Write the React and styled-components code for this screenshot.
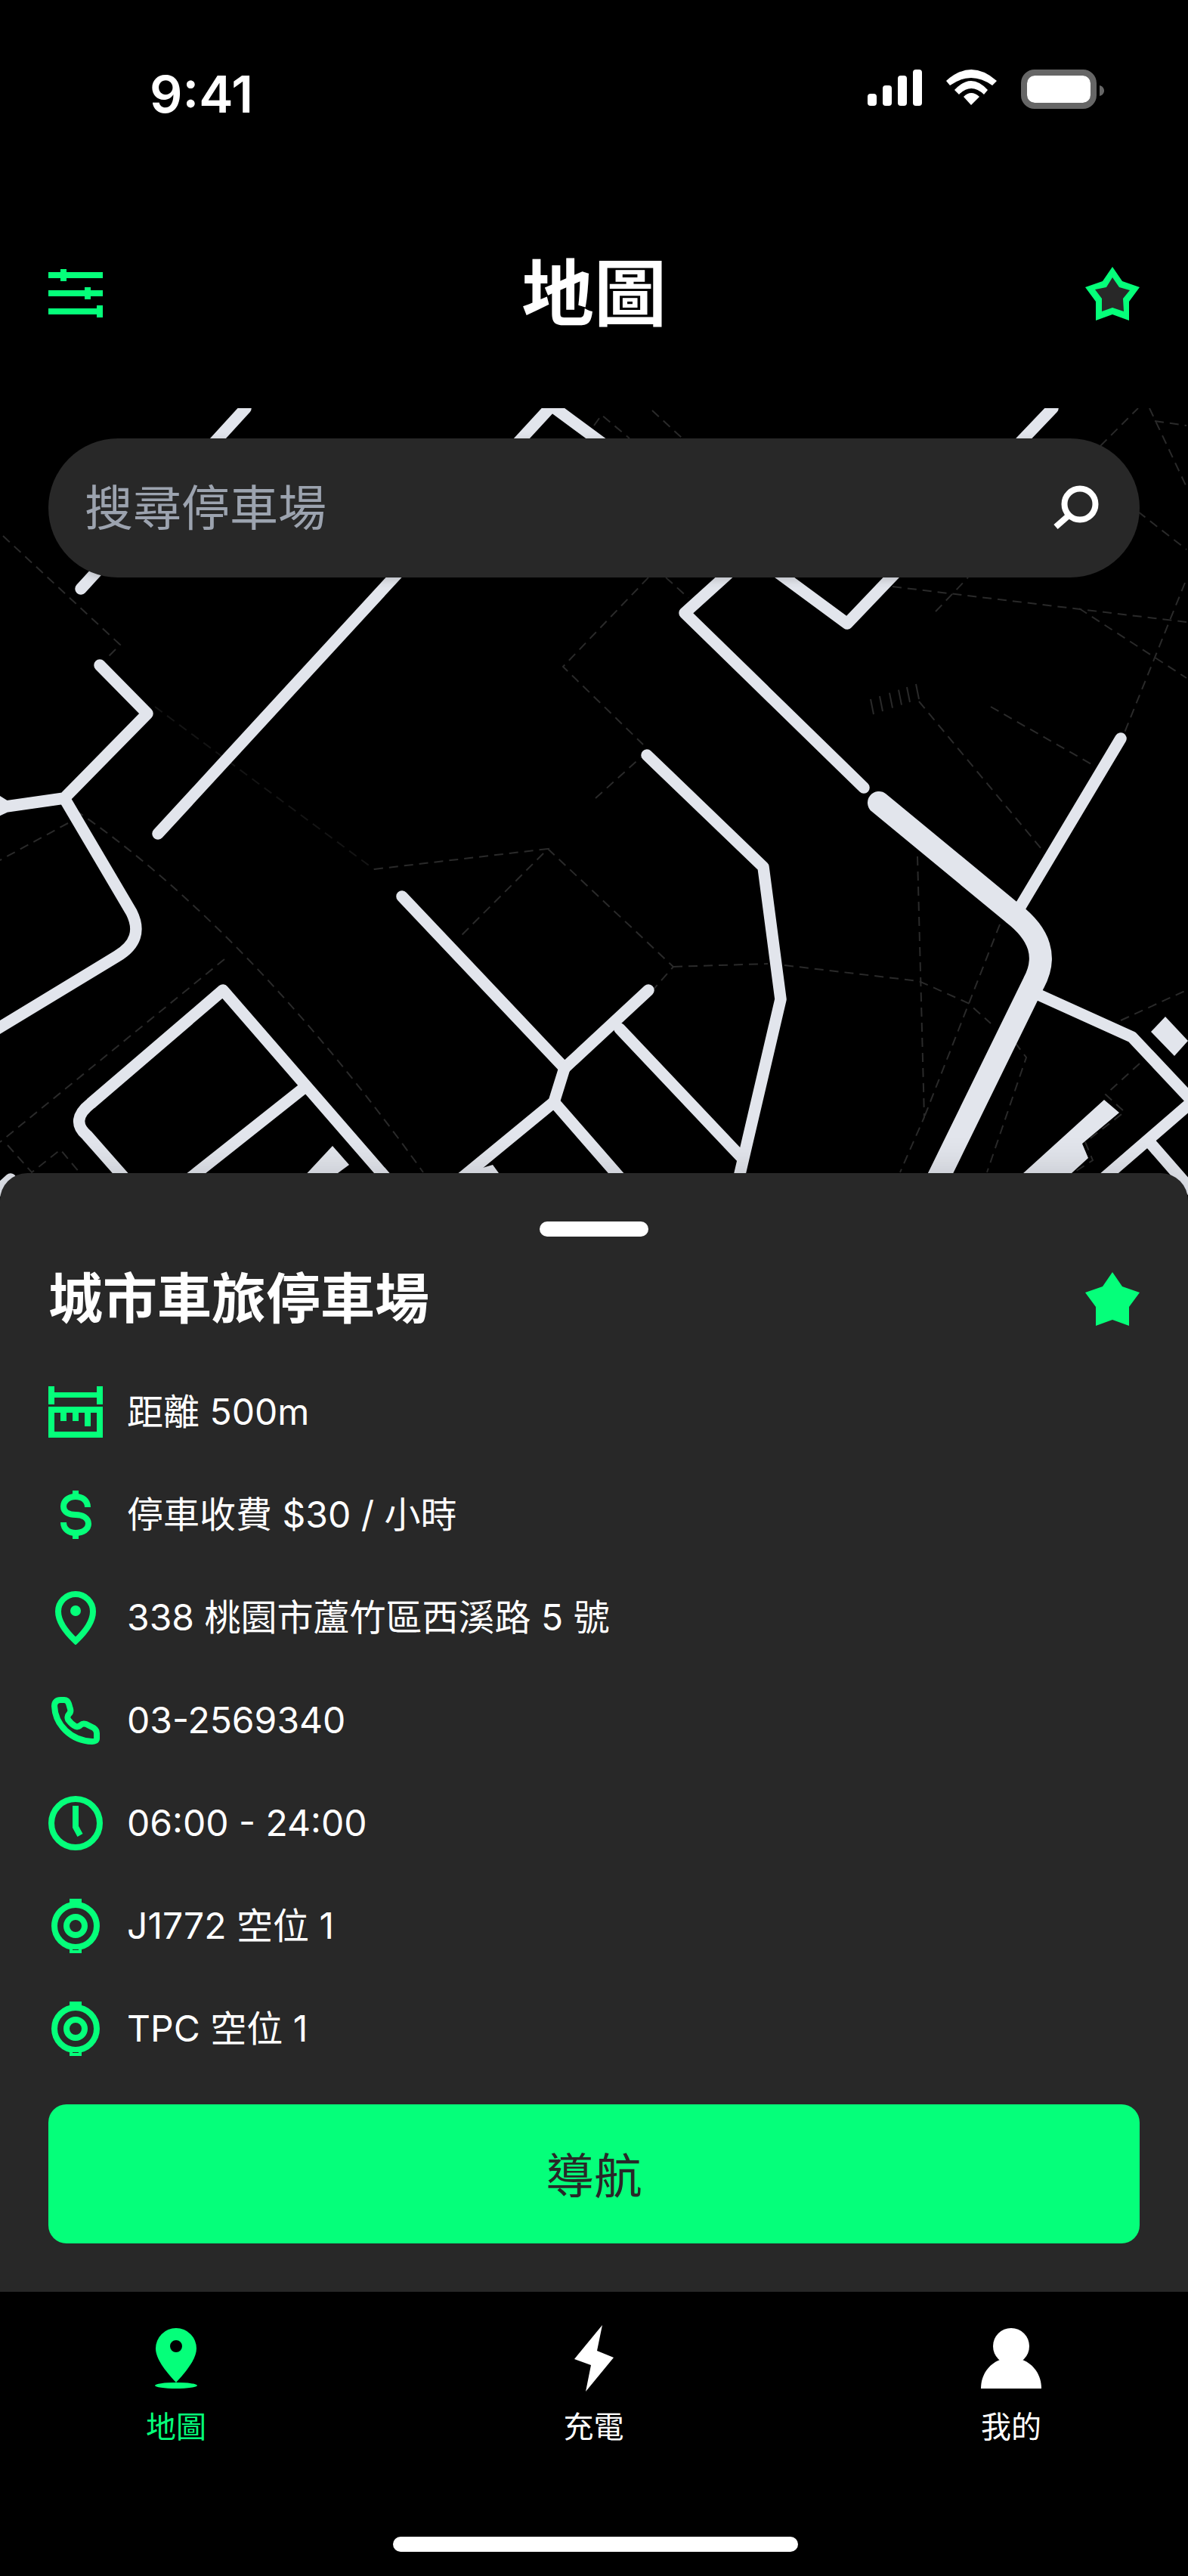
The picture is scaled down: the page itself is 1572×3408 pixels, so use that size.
import React from "react";
import styled, { createGlobalStyle } from "styled-components";

const GREEN = "#05FF7A";
const PANEL = "#282828";
const FONT = `Inter, "Noto Sans CJK TC", sans-serif`;

const Global = createGlobalStyle`
  html, body { margin: 0; padding: 0; background: #000; }
  body { font-family: ${FONT}; }
  #root { width: 1572px; }
`;

const Screen = styled.div`
  width: 1572px;
  height: 3408px;
  background: #000;
  display: flex;
  flex-direction: column;
  overflow: hidden;
  color: #fff;
`;

const StatusBar = styled.div`
  height: 176px;
  box-sizing: border-box;
  padding: 92px 111px 0 198px;
  display: flex;
  justify-content: space-between;
  align-items: flex-start;
`;
const Time = styled.div`
  font-size: 68px;
  line-height: 64px;
  font-weight: 600;
`;
const StatusIcons = styled.div`
  display: flex;
  align-items: flex-start;
  gap: 32px;
  svg { display: block; }
`;

const Header = styled.header`
  position: relative;
  z-index: 2;
  height: 72px;
  padding: 176px 64px 116px;
  display: flex;
  justify-content: space-between;
  align-items: center;
  background: #000;
`;
const HeaderTitle = styled.h1`
  margin: 0;
  font-size: 96px;
  line-height: 72px;
  font-weight: 700;
`;
const IconBox = styled.svg`
  width: 72px;
  height: 72px;
  flex: none;
  display: block;
`;

const MapArea = styled.div`
  position: relative;
  height: 1052px;
  flex: none;
  padding: 40px 64px 0;
  box-sizing: border-box;
`;
const MapSvg = styled.svg`
  position: absolute;
  inset: 0;
  width: 1572px;
  height: 1052px;
  display: block;
`;
const Road = styled.path`
  fill: none;
  stroke: #e2e5ec;
  stroke-width: ${(p) => p.$w || 15.5}px;
  stroke-linecap: round;
  stroke-linejoin: round;
`;
const Block = styled.polygon`
  fill: #e2e5ec;
`;
const Trail = styled.path`
  fill: none;
  stroke: ${(p) => p.$c || "#2a2a2a"};
  stroke-width: 2px;
  stroke-dasharray: 12 8;
`;
const SearchBar = styled.div`
  position: relative;
  height: 184px;
  border-radius: 92px;
  background: ${PANEL};
  box-shadow: 0 3px 12px rgba(0, 0, 0, 0.18);
  display: flex;
  align-items: center;
  justify-content: space-between;
  padding: 0 50px 0 48px;
`;
const Placeholder = styled.span`
  font-size: 64px;
  color: #9ca3af;
  line-height: 1;
`;
const SearchIcon = styled.svg`
  width: 64px;
  height: 64px;
  margin-top: 2px;
`;

const Sheet = styled.section`
  position: relative;
  z-index: 1;
  margin-top: -40px;
  height: 1480px;
  flex: none;
  box-sizing: border-box;
  background: ${PANEL};
  border-radius: 36px 36px 0 0;
  box-shadow: 0 0 50px rgba(0, 0, 0, 0.16);
  padding: 64px;
  display: flex;
  flex-direction: column;
`;
const Handle = styled.div`
  width: 144px;
  height: 20px;
  border-radius: 10px;
  background: #fff;
  align-self: center;
`;
const TitleRow = styled.div`
  margin-top: 46px;
  height: 72px;
  display: flex;
  align-items: center;
  justify-content: space-between;
`;
const Title = styled.h2`
  margin: 0;
  font-size: 72px;
  font-weight: 700;
  line-height: 72px;
`;
const Rows = styled.ul`
  list-style: none;
  margin: 78px 0 0;
  padding: 0;
  display: flex;
  flex-direction: column;
  gap: 64px;
`;
const Row = styled.li`
  height: 72px;
  display: flex;
  align-items: center;
  gap: 32px;
  font-size: 48px;
  line-height: 72px;
  font-weight: 400;
`;
const NavButton = styled.button`
  margin-top: 64px;
  height: 184px;
  flex: none;
  border: 0;
  border-radius: 24px;
  padding: 0 0 4px;
  background: ${GREEN};
  color: ${PANEL};
  font-family: ${FONT};
  font-size: 64px;
  font-weight: 400;
`;

const TabBar = styled.nav`
  flex: 1;
  padding: 44px 65px 0 64px;
  display: flex;
  justify-content: space-between;
  align-items: flex-start;
  background: #000;
`;
const Tab = styled.div`
  width: 338px;
  display: flex;
  flex-direction: column;
  align-items: center;
  color: ${(p) => (p.$active ? GREEN : "#fff")};
`;
const TabIcon = styled.svg`
  height: 88px;
  width: 88px;
  display: block;
`;
const TabLabel = styled.span`
  margin-top: 17px;
  font-size: 40px;
  line-height: 60px;
  font-weight: 400;
`;
const HomeIndicator = styled.div`
  position: absolute;
  left: 520px;
  top: 3356px;
  width: 536px;
  height: 20px;
  border-radius: 10px;
  background: #fff;
`;

const roads = [
  ["M325 540L107 779"],
  ["M209 1103L730 537L1121 825L1393 540"],
  ["M132 880L195 944L85 1056L8 1067L-20 1050M8 1067L-20 1080"],
  ["M85 1056L174 1207Q192 1243 155 1265L-10 1365"],
  ["M540 1592L295 1310L120 1460Q92 1482 115 1502L175 1570"],
  ["M400 1441L212 1590"],
  ["M532 1186L747 1413L858 1310"],
  ["M747 1413L733 1458L570 1592"],
  ["M733 1458L850 1592"],
  ["M820 1361L980 1530"],
  ["M856 999L1010 1147L1033 1322L975 1570"],
  ["M1143 1042L906 811L958 764L1000 725"],
  ["M1348 1203L1483 977"],
  ["M1372 1315L1498 1372L1578 1457L1430 1585"],
  ["M1522 1512L1590 1590"],
  ["M-10 1582L14 1560"],
  ["M1163 1062L1340 1208Q1395 1250 1368 1300L1225 1592", 30],
];

const blocks = [
  "1542,1345 1572,1377 1554,1397 1523,1365",
  "1461,1455 1481,1472 1432,1513 1440,1532 1418,1552 1385,1592 1310,1592",
  "440,1516 462,1541 447,1552 385,1575",
  "652,1541 660,1552 640,1570 615,1552",
];

const trails = [
  ["M4 709L159 853L140 872"],
  ["M205 935L495 1150", "#141414"],
  ["M495 1150L725 1123L609 1239"],
  ["M725 1123L891 1279L861 1313"],
  ["M891 1279L1016 1275M1038 1277L1216 1298L1281 1327L1311 1354"],
  ["M1343 1379L1358 1399L1306 1551"],
  ["M1214 1133L1223 1478L1191 1551"],
  ["M1323 1223L1223 1478"],
  ["M858 764L745 882L851 985"],
  ["M788 1056L848 1002"],
  ["M881 764L911 791"],
  ["M786 563L796 549L833 580"],
  ["M863 543L903 580"],
  ["M1456 590L1506 540"],
  ["M1528 557L1570 563"],
  ["M1521 540L1570 644"],
  ["M1506 677L1570 727"],
  ["M1181 776L1570 823"],
  ["M1238 809L1281 764"],
  ["M1428 805L1570 897"],
  ["M1568 771L1488 969"],
  ["M1216 928L1378 1123"],
  ["M1311 935L1446 1012"],
  ["M1483 1350L1570 1310"],
  ["M1508 1407L1463 1448L1488 1471L1436 1511L1446 1535L1421 1551"],
  ["M297 1269L0 1511"],
  ["M90 1089L0 1138"],
  ["M100 1072Q330 1230 560 1551"],
  ["M10 1515L42 1551L80 1521L105 1551"],
];

const ticks = [1156, 1168, 1181, 1193, 1204, 1216];

const StarOutline = () => (
  <IconBox viewBox="1436 352 72 72">
    <polygon fill={GREEN} points="1472,353 1485,372 1508,380 1494,399 1494,424 1472,416 1450,424 1450,399 1436,380 1459,372" />
    <polygon fill={PANEL} points="1472,367 1481,380 1495,384 1486,395 1487,412 1472,407 1458,412 1458,395 1449,383 1464,380" />
  </IconBox>
);
const StarFilled = () => (
  <IconBox viewBox="1436 352 72 72">
    <polygon fill={GREEN} points="1472,353 1485,372 1508,380 1494,399 1494,424 1472,416 1450,424 1450,399 1436,380 1459,372" />
  </IconBox>
);
const FilterIcon = () => (
  <IconBox viewBox="64 352 72 72" fill={GREEN}>
    <rect x="64" y="360" width="72" height="8" />
    <rect x="80" y="356" width="8" height="16" />
    <rect x="64" y="384" width="72" height="8" />
    <rect x="112" y="380" width="8" height="16" />
    <rect x="64" y="408" width="72" height="8" />
    <rect x="128" y="404" width="8" height="16" />
  </IconBox>
);

const RulerIcon = () => (
  <IconBox viewBox="0 0 72 72" fill={GREEN}>
    <rect x="0" y="2" width="8" height="24" />
    <rect x="64" y="2" width="8" height="24" />
    <rect x="0" y="10" width="72" height="7" />
    <rect x="4" y="33" width="64" height="33" fill="none" stroke={GREEN} strokeWidth="8" />
    <rect x="16" y="33" width="8" height="15" />
    <rect x="32" y="33" width="8" height="15" />
    <rect x="48" y="33" width="8" height="22" />
  </IconBox>
);
const DollarIcon = () => (
  <IconBox viewBox="0 0 72 72" fill="none" stroke={GREEN} strokeWidth="8">
    <path d="M36 4V12M36 60V68" />
    <path d="M52 26C52 17 45 12 36 12C26 12 20 18 20 25C20 33 28 36 36 36C45 36 53 40 53 48C53 55 46 60 36 60C27 60 20 55 20 46" />
  </IconBox>
);
const PinIcon = () => (
  <IconBox viewBox="0 0 72 72">
    <path d="M36 67C20 52 13 40 13 28A23 23 0 0 1 59 28C59 40 52 52 36 67Z" fill="none" stroke={GREEN} strokeWidth="8" />
    <circle cx="36" cy="27" r="7" fill={GREEN} />
  </IconBox>
);
const PhoneIcon = () => (
  <IconBox viewBox="0 0 72 72">
    <path
      d="M8 17C8 12 11 9 16 9L21 9C24 9 26 11 27 14L29 21C30 24 29 26 27 28C25 30 25 32 26 35C29 39 32 42 36 44C39 45 41 44 43 42C45 40 47 40 50 41L60 46C63 48 64 50 64 53L64 60C64 63 61 64 58 64C30 63 9 42 8 17Z"
      fill="none"
      stroke={GREEN}
      strokeWidth="8"
      strokeLinejoin="round"
    />
  </IconBox>
);
const ClockIcon = () => (
  <IconBox viewBox="0 0 72 72" fill="none" stroke={GREEN} strokeWidth="8">
    <circle cx="36" cy="36" r="32" />
    <path d="M36 13V41L42 52" />
  </IconBox>
);
const PlugIcon = () => (
  <IconBox viewBox="0 0 72 72" fill="none" stroke={GREEN} strokeWidth="8">
    <circle cx="36" cy="36" r="28" />
    <circle cx="36" cy="36" r="12" />
    <rect x="28" y="0" width="16" height="6" fill={GREEN} stroke="none" />
    <rect x="30" y="65" width="12" height="5" strokeWidth="4" fill={PANEL} />
  </IconBox>
);

const details = [
  [RulerIcon, "距離 500m"],
  [DollarIcon, "停車收費 $30 / 小時"],
  [PinIcon, "338 桃園市蘆竹區西溪路 5 號"],
  [PhoneIcon, "03-2569340"],
  [ClockIcon, "06:00 - 24:00"],
  [PlugIcon, "J1772 空位 1"],
  [PlugIcon, "TPC 空位 1"],
];

export default function App() {
  return (
    <Screen>
      <Global />
      <StatusBar>
        <Time>9:41</Time>
        <StatusIcons>
          <svg width="72" height="48" viewBox="1147 92 72 48" fill="#fff">
            <rect x="1147" y="124" width="12" height="16" rx="4" />
            <rect x="1167" y="113" width="12" height="27" rx="4" />
            <rect x="1187" y="100" width="12" height="40" rx="4" />
            <rect x="1207" y="92" width="12" height="48" rx="4" />
          </svg>
          <svg width="67" height="47" viewBox="1252 92 67 47" fill="#fff">
            <path d="M1252 107Q1285 77 1319 107L1313 113Q1285 93 1257 113Z" />
            <path d="M1263 119Q1285 95 1307 119L1302 125Q1285 109 1269 125Z" />
            <path d="M1275 128Q1285 118 1296 128L1285 139Z" />
          </svg>
          <svg width="110" height="52" viewBox="1351 92 110 52">
            <rect x="1355" y="96" width="92" height="44" rx="14" fill="none" stroke="#666" strokeWidth="8" />
            <rect x="1359" y="100" width="84" height="36" rx="10" fill="#fff" />
            <path d="M1455 113C1459 114 1461 117 1461 120C1461 123 1459 126 1455 127Z" fill="#666" />
          </svg>
        </StatusIcons>
      </StatusBar>

      <Header>
        <FilterIcon />
        <HeaderTitle>地圖</HeaderTitle>
        <StarOutline />
      </Header>

      <MapArea>
        <MapSvg viewBox="0 540 1572 1052">
          {trails.map(([d, c], i) => (
            <Trail key={i} d={d} $c={c} />
          ))}
          {ticks.map((x) => (
            <Trail key={x} d={`M${x} ${945 - (x - 1156) / 3}L${x - 4} ${925 - (x - 1156) / 3}`} style={{ strokeDasharray: "none" }} />
          ))}
          {roads.map(([d, w], i) => (
            <Road key={i} d={d} $w={w} />
          ))}
          {blocks.map((p) => (
            <Block key={p} points={p} />
          ))}
        </MapSvg>
        <SearchBar>
          <Placeholder>搜尋停車場</Placeholder>
          <SearchIcon viewBox="0 0 64 64">
            <circle cx="35" cy="26" r="20.5" fill="none" stroke="#fff" strokeWidth="8" />
            <path d="M19 42L3 56" stroke="#fff" strokeWidth="8" fill="none" />
          </SearchIcon>
        </SearchBar>
      </MapArea>

      <Sheet>
        <Handle />
        <TitleRow>
          <Title>城市車旅停車場</Title>
          <StarFilled />
        </TitleRow>
        <Rows>
          {details.map(([Icon, text]) => (
            <Row key={text}>
              <Icon />
              <span>{text}</span>
            </Row>
          ))}
        </Rows>
        <NavButton>導航</NavButton>
      </Sheet>

      <TabBar>
        <Tab $active>
          <TabIcon viewBox="189 3076 88 88">
            <path
              fill={GREEN}
              fillRule="evenodd"
              d="M233 3152C218 3136 206 3120 206 3107A27 27 0 0 1 260 3107C260 3120 248 3136 233 3152ZM233 3096A8 8 0 1 0 233 3112A8 8 0 1 0 233 3096Z"
            />
            <ellipse cx="233" cy="3156" rx="28" ry="4" fill={GREEN} />
          </TabIcon>
          <TabLabel>地圖</TabLabel>
        </Tab>
        <Tab>
          <TabIcon viewBox="742 3076 88 88">
            <polygon fill="#fff" points="797,3076 790,3110 812,3119 775,3164 782,3129 760,3121" />
          </TabIcon>
          <TabLabel>充電</TabLabel>
        </Tab>
        <Tab>
          <TabIcon viewBox="1294 3076 88 88" fill="#fff">
            <circle cx="1338" cy="3104" r="24" />
            <path d="M1298 3160C1298 3142 1308 3128 1323 3122L1353 3122C1368 3128 1378 3142 1378 3160Z" />
          </TabIcon>
          <TabLabel>我的</TabLabel>
        </Tab>
      </TabBar>
      <HomeIndicator />
    </Screen>
  );
}
